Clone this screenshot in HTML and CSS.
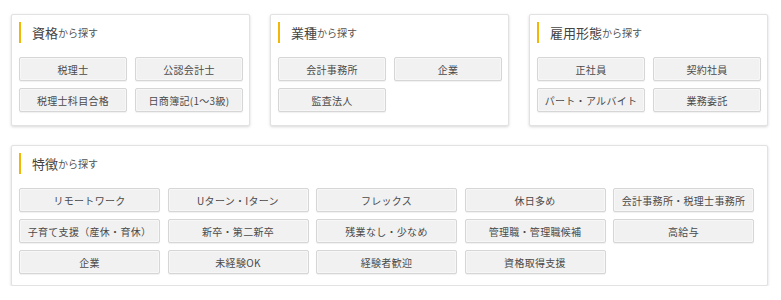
FILE: index.html
```html
<!DOCTYPE html>
<html lang="ja">
<head>
<meta charset="utf-8">
<link rel="stylesheet" href="styles.css">
</head>
<body>
<div class="wrap">
  <div class="top-row">
    <section class="card">
      <h2 class="card-title"><span class="big">資格</span>から探す</h2>
      <div class="btns two">
        <a class="btn">税理士</a>
        <a class="btn">公認会計士</a>
        <a class="btn">税理士科目合格</a>
        <a class="btn">日商簿記(1～3級)</a>
      </div>
    </section>
    <section class="card">
      <h2 class="card-title"><span class="big">業種</span>から探す</h2>
      <div class="btns two">
        <a class="btn">会計事務所</a>
        <a class="btn">企業</a>
        <a class="btn">監査法人</a>
      </div>
    </section>
    <section class="card">
      <h2 class="card-title"><span class="big">雇用形態</span>から探す</h2>
      <div class="btns two">
        <a class="btn">正社員</a>
        <a class="btn">契約社員</a>
        <a class="btn">パート・アルバイト</a>
        <a class="btn">業務委託</a>
      </div>
    </section>
  </div>
  <section class="card wide">
    <h2 class="card-title"><span class="big">特徴</span>から探す</h2>
    <div class="btns five">
      <a class="btn">リモートワーク</a>
      <a class="btn">Uターン・Iターン</a>
      <a class="btn">フレックス</a>
      <a class="btn">休日多め</a>
      <a class="btn">会計事務所・税理士事務所</a>
      <a class="btn">子育て支援（産休・育休）</a>
      <a class="btn">新卒・第二新卒</a>
      <a class="btn">残業なし・少なめ</a>
      <a class="btn">管理職・管理職候補</a>
      <a class="btn">高給与</a>
      <a class="btn">企業</a>
      <a class="btn">未経験OK</a>
      <a class="btn">経験者歓迎</a>
      <a class="btn">資格取得支援</a>
    </div>
  </section>
</div>
</body>
</html>
```
FILE: styles.css
```css
* { box-sizing: border-box; }
html, body { margin: 0; padding: 0; background: #fff; }
body {
  font-family: "Noto Sans CJK JP", "Noto Sans", sans-serif;
  color: #333;
}
.wrap {
  width: 781px;
  padding: 14px 13px 0 11px;
}
.top-row {
  display: grid;
  grid-template-columns: repeat(3, 1fr);
  column-gap: 20px;
  margin-bottom: 19px;
}
.card {
  background: #fff;
  border: 1px solid #e2e2e2;
  border-radius: 2px;
  box-shadow: 0 1px 3px rgba(0,0,0,0.16);
  padding: 7px 6px 13px 7px;
}
.card.wide {
  padding: 7px 13px 11px 7px;
}
.card-title {
  margin: 0 0 14px 0;
  height: 21px;
  border-left: 2px solid #f2b705;
  padding-left: 11px;
  display: flex;
  align-items: center;
  font-size: 10px;
  font-weight: normal;
  color: #555;
  line-height: 1;
}
.card-title .big {
  font-size: 13px;
  color: #444;
}
.btns {
  display: grid;
  column-gap: 8px;
  row-gap: 7px;
}
.btns.two { grid-template-columns: repeat(2, 1fr); }
.btns.five { grid-template-columns: repeat(5, 1fr); column-gap: 7.5px; }
.btn {
  display: flex;
  align-items: center;
  justify-content: center;
  height: 24px;
  background: #f1f1f1;
  border: 1px solid #d6d6d6;
  border-radius: 2px;
  box-shadow: inset 0 0 0 1px #f7f7f7, 0 1px 1px rgba(0,0,0,0.06);
  font-size: 10px;
  letter-spacing: 0.3px;
  color: #4a4a4a;
  text-decoration: none;
  white-space: nowrap;
}
```
